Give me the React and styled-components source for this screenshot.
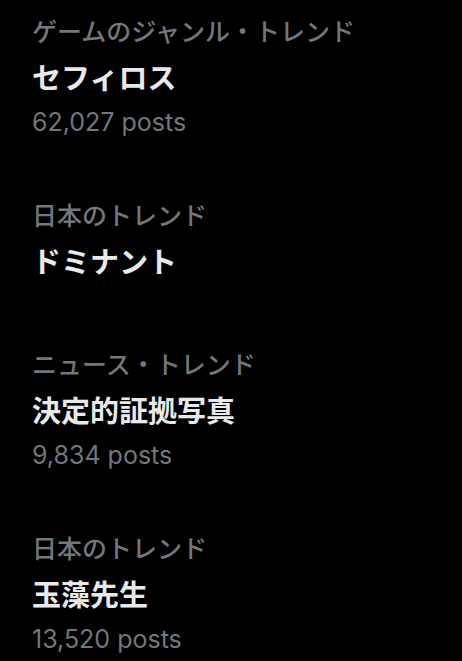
import React from "react";
import styled, { createGlobalStyle } from "styled-components";

const GlobalStyle = createGlobalStyle`
    html, body {
        margin: 0;
        padding: 0;
        background: #000;
    }
    body {
        font-family: "Noto Sans CJK JP", "Noto Sans", sans-serif;
    }
`

const List = styled.div`
    width: 462px;
    height: 661px;
    overflow: hidden;
    background: #000;
`

const Trend = styled.div`
    display: flex;
    flex-direction: column;
    padding: 7px 32px ${({ $hasCount }) => ($hasCount ? "39px" : "50px")};
`

const Category = styled.div`
    font-family: "Noto Sans CJK JP", sans-serif;
    font-size: 25px;
    font-weight: 500;
    line-height: 46px;
    color: #72777c;
    white-space: nowrap;
`

const Title = styled.div`
    font-family: "Noto Sans CJK JP", sans-serif;
    font-size: 29px;
    font-weight: 700;
    line-height: 46px;
    color: #e7e9ea;
    white-space: nowrap;
`

const Count = styled.div`
    font-family: Inter, "Noto Sans", sans-serif;
    font-size: 25px;
    font-weight: 400;
    line-height: 46px;
    color: #72777c;
`

const trends = [
    { category: "ゲームのジャンル・トレンド", title: "セフィロス", count: "62,027" },
    { category: "日本のトレンド", title: "ドミナント" },
    { category: "ニュース・トレンド", title: "決定的証拠写真", count: "9,834" },
    { category: "日本のトレンド", title: "玉藻先生", count: "13,520" },
]

const App = () => {
    return (
        <>
            <GlobalStyle />
            <List>
                {trends.map((t, i) => (
                    <Trend key={i} $hasCount={!!t.count}>
                        <Category>{t.category}</Category>
                        <Title>{t.title}</Title>
                        {t.count && <Count>{t.count} posts</Count>}
                    </Trend>
                ))}
            </List>
        </>
    )
}

export default App
